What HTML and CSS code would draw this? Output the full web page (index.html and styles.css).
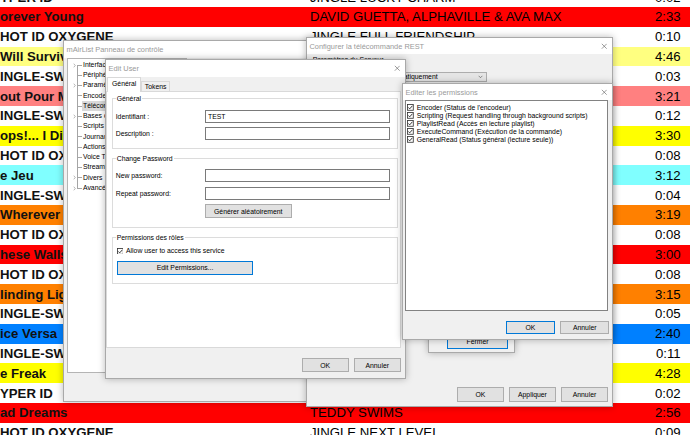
FILE: index.html
```html
<!DOCTYPE html>
<html lang="fr">
<head>
  <meta charset="UTF-8">
  <meta name="viewport" content="width=device-width, initial-scale=1.0">
  <title>mAirList - Editer les permissions</title>
  <link rel="stylesheet" href="styles.css">
</head>
<body>
  <!-- playlist behind the dialogs -->
  <div class="playlist">
    <div class="row white"><span class="title">YPER ID</span><span class="artist">JINGLE LUCKY CHARM</span><span class="dur">0:02</span></div>
    <div class="row red"><span class="title">orever Young</span><span class="artist">DAVID GUETTA, ALPHAVILLE &amp; AVA MAX</span><span class="dur">2:33</span></div>
    <div class="row white"><span class="title">HOT ID OXYGENE</span><span class="artist">JINGLE FULL FRIENDSHIP</span><span class="dur">0:10</span></div>
    <div class="row pale-yellow"><span class="title">Will Survive</span><span class="artist">GLORIA GAYNOR</span><span class="dur">4:46</span></div>
    <div class="row white"><span class="title">INGLE-SWEEP</span><span class="artist">JINGLE SWEEP</span><span class="dur">0:03</span></div>
    <div class="row salmon"><span class="title">out Pour Moi</span><span class="artist"></span><span class="dur">3:21</span></div>
    <div class="row white"><span class="title">INGLE-SWEEP</span><span class="artist">JINGLE SWEEP</span><span class="dur">0:12</span></div>
    <div class="row yellow"><span class="title">ops!... I Did It Again</span><span class="artist">BRITNEY SPEARS</span><span class="dur">3:30</span></div>
    <div class="row white"><span class="title">HOT ID OXYGENE</span><span class="artist">JINGLE ID</span><span class="dur">0:08</span></div>
    <div class="row cyan"><span class="title">e Jeu</span><span class="artist"></span><span class="dur">3:12</span></div>
    <div class="row white"><span class="title">INGLE-SWEEP</span><span class="artist">JINGLE SWEEP</span><span class="dur">0:04</span></div>
    <div class="row orange"><span class="title">Wherever You Will Go</span><span class="artist">THE CALLING</span><span class="dur">3:19</span></div>
    <div class="row white"><span class="title">HOT ID OXYGENE</span><span class="artist">JINGLE ID</span><span class="dur">0:08</span></div>
    <div class="row red"><span class="title">hese Walls</span><span class="artist">DUA LIPA</span><span class="dur">3:00</span></div>
    <div class="row white"><span class="title">HOT ID OXYGENE</span><span class="artist">JINGLE ID</span><span class="dur">0:08</span></div>
    <div class="row orange"><span class="title">linding Lights</span><span class="artist">THE WEEKND</span><span class="dur">3:15</span></div>
    <div class="row white"><span class="title">INGLE-SWEEP</span><span class="artist">JINGLE SWEEP</span><span class="dur">0:05</span></div>
    <div class="row blue"><span class="title">ice Versa</span><span class="artist"></span><span class="dur">2:40</span></div>
    <div class="row white"><span class="title">INGLE-SWEEP</span><span class="artist">JINGLE SWEEP</span><span class="dur">0:11</span></div>
    <div class="row yellow"><span class="title">e Freak</span><span class="artist">CHIC</span><span class="dur">4:28</span></div>
    <div class="row white"><span class="title">YPER ID</span><span class="artist">JINGLE HYPER</span><span class="dur">0:02</span></div>
    <div class="row red"><span class="title">ad Dreams</span><span class="artist">TEDDY SWIMS</span><span class="dur">2:56</span></div>
    <div class="row white"><span class="title">HOT ID OXYGENE</span><span class="artist">JINGLE NEXT LEVEL</span><span class="dur">0:09</span></div>
  </div>

  <!-- mAirList control panel -->
  <div class="win panel-win">
    <div class="titlebar"><span>mAirList Panneau de contrôle</span></div>
    <div class="panel-body">
      <ul class="tree">
        <li><span class="twist"><svg viewBox="0 0 4 6"><path d="M1 .6L3 3 1 5.4"/></svg></span><span class="tick"></span><span class="label">Interfaces</span></li>
        <li><span class="twist"></span><span class="tick"></span><span class="label">Périphériques</span></li>
        <li><span class="twist"><svg viewBox="0 0 4 6"><path d="M1 .6L3 3 1 5.4"/></svg></span><span class="tick"></span><span class="label">Paramètres</span></li>
        <li><span class="twist"></span><span class="tick"></span><span class="label">Encodeurs</span></li>
        <li class="sel"><span class="twist"></span><span class="tick"></span><span class="label">Télécommandes</span></li>
        <li><span class="twist"><svg viewBox="0 0 4 6"><path d="M1 .6L3 3 1 5.4"/></svg></span><span class="tick"></span><span class="label">Bases de données</span></li>
        <li><span class="twist"></span><span class="tick"></span><span class="label">Scripts</span></li>
        <li><span class="twist"></span><span class="tick"></span><span class="label">Journaux</span></li>
        <li><span class="twist"></span><span class="tick"></span><span class="label">Actions</span></li>
        <li><span class="twist"></span><span class="tick"></span><span class="label">Voice Tracking</span></li>
        <li><span class="twist"></span><span class="tick"></span><span class="label">Streaming</span></li>
        <li><span class="twist"><svg viewBox="0 0 4 6"><path d="M1 .6L3 3 1 5.4"/></svg></span><span class="tick"></span><span class="label">Divers</span></li>
        <li><span class="twist"><svg viewBox="0 0 4 6"><path d="M1 .6L3 3 1 5.4"/></svg></span><span class="tick"></span><span class="label">Avancé</span></li>
      </ul>
    </div>
  </div>

  <!-- REST remote configuration -->
  <div class="win rest">
    <div class="titlebar short"><span>Configurer la télécommande REST</span><svg class="close" viewBox="0 0 8 8"><path d="M1 1L7 7M7 1L1 7"/></svg></div>
    <div class="rest-body">
      <div class="section-label">Paramètres du Serveur</div>
      <div class="combo"><span>Automatiquement</span><svg viewBox="0 0 8 5"><path d="M1 1l3 3 3-3"/></svg></div>
    </div>
    <div class="buttons">
      <button>OK</button>
      <button>Appliquer</button>
      <button>Annuler</button>
    </div>
  </div>

  <!-- small dialog with the Fermer button -->
  <div class="win small-win">
    <div class="small-body">
      <button class="default fermer">Fermer</button>
    </div>
  </div>

  <!-- Edit User -->
  <div class="win edit-user">
    <div class="titlebar"><span>Edit User</span><svg class="close" viewBox="0 0 8 8"><path d="M1 1L7 7M7 1L1 7"/></svg></div>
    <div class="tabs">
      <span class="tab active">Général</span>
      <span class="tab">Tokens</span>
    </div>
    <div class="tab-page">
      <div class="group">
        <div class="group-title">Général</div>
        <div class="field first"><label for="ident">Identifiant :</label><input type="text" id="ident" value="TEST"></div>
        <div class="field"><label for="desc">Description :</label><input type="text" id="desc"></div>
      </div>

      <div class="group pwd">
        <div class="group-title">Change Password</div>
        <div class="field first"><label for="pw1">New password:</label><input type="text" id="pw1"></div>
        <div class="field"><label for="pw2">Repeat password:</label><input type="text" id="pw2"></div>
        <button class="gen">Générer aléatoirement</button>
      </div>

      <div class="group roles">
        <div class="group-title">Permissions des rôles</div>
        <div class="check-row">
          <svg class="chk" viewBox="0 0 8 8"><rect x=".5" y=".5" width="7" height="7"/><path d="M1.6 4.1L3.2 5.8 6.5 2.1"/></svg>
          <span>Allow user to access this service</span>
        </div>
        <button class="default edit-perm">Edit Permissions...</button>
      </div>
    </div>
    <div class="buttons">
      <button>OK</button>
      <button>Annuler</button>
    </div>
  </div>

  <!-- Editer les permissions -->
  <div class="win perms">
    <div class="titlebar short"><span>Editer les permissions</span><svg class="close" viewBox="0 0 8 8"><path d="M1 1L7 7M7 1L1 7"/></svg></div>
    <ul class="perm-list">
      <li><svg class="chk" viewBox="0 0 8 8"><rect x=".5" y=".5" width="7" height="7"/><path d="M1.6 4.1L3.2 5.8 6.5 2.1"/></svg>Encoder (Status de l'encodeur)</li>
      <li><svg class="chk" viewBox="0 0 8 8"><rect x=".5" y=".5" width="7" height="7"/><path d="M1.6 4.1L3.2 5.8 6.5 2.1"/></svg>Scripting (Request handling through background scripts)</li>
      <li><svg class="chk" viewBox="0 0 8 8"><rect x=".5" y=".5" width="7" height="7"/><path d="M1.6 4.1L3.2 5.8 6.5 2.1"/></svg>PlaylistRead (Accès en lecture playlist)</li>
      <li><svg class="chk" viewBox="0 0 8 8"><rect x=".5" y=".5" width="7" height="7"/><path d="M1.6 4.1L3.2 5.8 6.5 2.1"/></svg>ExecuteCommand (Exécution de la commande)</li>
      <li><svg class="chk" viewBox="0 0 8 8"><rect x=".5" y=".5" width="7" height="7"/><path d="M1.6 4.1L3.2 5.8 6.5 2.1"/></svg>GeneralRead (Status général (lecture seule))</li>
    </ul>
    <div class="buttons">
      <button class="default">OK</button>
      <button>Annuler</button>
    </div>
  </div>
</body>
</html>
```

FILE: styles.css
```css
* {
  box-sizing: border-box;
}

html,
body {
  margin: 0;
}

body {
  position: relative;
  width: 690px;
  height: 435px;
  overflow: hidden;
  background-color: #fff;
  font-family: "Liberation Sans", Arial, sans-serif;
  color: #000;
}

/* playlist */

.playlist {
  margin-top: -12.8px;
}

.row {
  display: grid;
  grid-template-columns: 310px 1fr auto;
  align-items: center;
  height: 19.8px;
  font-size: 13.2px;
  white-space: nowrap;
}

.row .title {
  overflow: hidden;
  font-weight: bold;
  color: #111;
}

.row .artist {
  overflow: hidden;
}

.row .dur {
  padding-right: 9.3px;
}

.white { background-color: #fff; }
.red { background-color: #ff0000; }
.pale-yellow { background-color: #ffff80; }
.salmon { background-color: #ff8080; }
.yellow { background-color: #ffff00; }
.cyan { background-color: #80ffff; }
.orange { background-color: #ff8000; }
.blue { background-color: #0080ff; }

/* windows */

.win {
  position: absolute;
  display: flex;
  flex-direction: column;
  background-color: #f0f0f0;
  border: 1px solid #a9a9a9;
  box-shadow: 0 0 7px rgba(0, 0, 0, 0.28);
  font-size: 6.85px;
}

.titlebar {
  flex: none;
  display: flex;
  align-items: center;
  justify-content: space-between;
  height: 17px;
  padding: 0 5px 0 2.5px;
  background-color: #fff;
  color: #999;
  font-size: 7.4px;
}

.titlebar.short {
  height: 16px;
}

.close {
  width: 6.5px;
  height: 6.5px;
  fill: none;
  stroke: #666;
  stroke-width: 0.8;
}

button {
  height: 14px;
  padding: 0;
  background-color: #e1e1e1;
  border: 1px solid #adadad;
  border-radius: 0;
  font-family: inherit;
  font-size: 6.85px;
  color: #000;
}

button.default {
  border-color: #0078d7;
}

.buttons {
  flex: none;
  display: flex;
  justify-content: flex-end;
  gap: 5px;
}

.buttons button {
  width: 47px;
}

.chk {
  flex: none;
  width: 6.7px;
  height: 6.7px;
}

.chk rect {
  fill: #fff;
  stroke: #333;
  stroke-width: 1;
}

.chk path {
  fill: none;
  stroke: #111;
  stroke-width: 1;
}

/* control panel */

.panel-win {
  left: 63px;
  top: 40px;
  width: 320px;
  height: 362px;
}

.panel-body {
  padding-left: 3px;
}

.tree {
  width: 120px;
  height: 315px;
  margin: 0;
  padding: 0.9px 0 0 0;
  list-style: none;
  background-color: #fff;
  background-image: linear-gradient(#a5a5a5, #a5a5a5);
  background-repeat: no-repeat;
  background-position: 8.7px 6px;
  background-size: 1px 123px;
  border: 1px solid #b4b4b4;
}

.tree li {
  display: flex;
  align-items: center;
  height: 10.25px;
  padding-left: 4px;
  white-space: nowrap;
}

.twist {
  display: flex;
  align-items: center;
  width: 5px;
  height: 100%;
}

.twist svg {
  width: 3px;
  height: 5px;
  margin-left: 1px;
  fill: none;
  stroke: #777;
  stroke-width: 0.7;
}

.tick {
  width: 5px;
  height: 1px;
  background-color: #a5a5a5;
}

.tree .label {
  flex: 1;
  padding-left: 1px;
  line-height: 10.25px;
}

.tree .sel .label {
  background-color: #d9d9d9;
}

/* REST configuration */

.rest {
  left: 306px;
  top: 37px;
  width: 307px;
  height: 370px;
}

.rest-body {
  flex: 1;
  padding: 2px 0 0 5.7px;
}

.section-label {
  line-height: 8px;
}

.combo {
  display: flex;
  align-items: center;
  justify-content: space-between;
  width: 107px;
  height: 10px;
  margin: 7.5px 0 0 67.3px;
  padding: 0 3px;
  background-color: #e5e5e5;
  border: 1px solid #adadad;
}

.combo svg {
  width: 5px;
  height: 3.5px;
  fill: none;
  stroke: #444;
  stroke-width: 0.9;
}

.rest .buttons {
  gap: 5.5px;
  padding: 0 4.3px 4.3px 0;
}

.rest .buttons button {
  width: 46.5px;
  height: 14.4px;
}

/* small dialog behind the permissions */

.small-win {
  left: 428px;
  top: 250px;
  width: 87px;
  height: 103px;
}

.small-body {
  flex: 1;
  display: flex;
  align-items: flex-end;
  justify-content: flex-end;
  padding: 0 6px 3.5px 0;
}

.fermer {
  width: 61px;
  height: 13.5px;
}

/* Edit User */

.edit-user {
  left: 105px;
  top: 59px;
  width: 301px;
  height: 320px;
}

.tabs {
  flex: none;
  display: flex;
  align-items: flex-end;
  height: 15px;
  margin-bottom: -1px;
  padding-left: 1px;
}

.tab {
  height: 11.5px;
  padding: 0 2.5px;
  line-height: 10.5px;
  border: 1px solid #d9d9d9;
  border-bottom: none;
}

.tab.active {
  position: relative;
  z-index: 1;
  height: 15px;
  padding: 0 4px;
  line-height: 12px;
  background-color: #fff;
}

.tab-page {
  flex: none;
  height: 257px;
  margin-right: 4.3px;
  padding: 6.3px 2px 0 4.7px;
  background-color: #fff;
  border: 1px solid #d9d9d9;
}

.group {
  padding: 0 6.7px 8px 3px;
  border: 1px solid #dcdcdc;
}

.group.pwd {
  margin-top: 9.5px;
  padding-bottom: 9px;
}

.group.roles {
  margin-top: 9px;
}

.group-title {
  display: table;
  margin: -4.5px 0 0 0;
  padding: 0 1px;
  line-height: 8px;
  background-color: #fff;
}

.field {
  display: flex;
  align-items: center;
  height: 13px;
  margin-top: 4px;
}

.field.first {
  margin-top: 7.2px;
}

.pwd .field {
  margin-top: 4.7px;
}

.pwd .field.first {
  margin-top: 6px;
}

.field label {
  flex: none;
  width: 89.3px;
}

.field input {
  flex: 1;
  min-width: 0;
  height: 13px;
  margin: 0;
  padding: 0 2px;
  border: 1px solid #7a7a7a;
  border-radius: 0;
  outline: none;
  font-family: inherit;
  font-size: 6.85px;
  color: #000;
}

.gen {
  display: block;
  width: 86.6px;
  margin: 4.6px 0 0 89.3px;
}

.check-row {
  display: flex;
  align-items: center;
  gap: 2.6px;
  height: 9px;
  margin: 4.7px 0 0 1px;
}

.edit-perm {
  display: block;
  width: 136.6px;
  margin: 5.5px 0 0 1px;
}

.edit-user .buttons {
  padding: 10px 4.3px 0 0;
}

/* Editer les permissions */

.perms {
  left: 402px;
  top: 83px;
  width: 211px;
  height: 257px;
}

.perm-list {
  flex: none;
  height: 211px;
  margin: 0 4px 0 2px;
  padding: 2.5px 0 0 1.3px;
  list-style: none;
  background-color: #fff;
  border: 1px solid #828282;
}

.perm-list li {
  display: flex;
  align-items: center;
  gap: 2.7px;
  height: 8px;
  white-space: nowrap;
}

.perms .buttons {
  gap: 5.7px;
  padding: 10px 3px 0 0;
}

.perms .buttons button {
  width: 48.6px;
  height: 12.6px;
}
```
